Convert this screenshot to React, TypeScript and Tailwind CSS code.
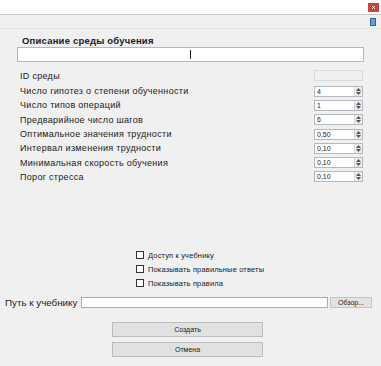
import React from "react";

const rows: { label: string; value: string }[] = [
  { label: "Число гипотез о степени обученности", value: "4" },
  { label: "Число типов операций", value: "1" },
  { label: "Предварийное число шагов", value: "6" },
  { label: "Оптимальное значения трудности", value: "0,50" },
  { label: "Интервал изменения трудности", value: "0,10" },
  { label: "Минимальная скорость обучения", value: "0,10" },
  { label: "Порог стресса", value: "0,10" },
];

const checks = ["Доступ к учебнику", "Показывать правильные ответы", "Показывать правила"];

function SpinBox({ value }: { value: string }) {
  return (
    <div className="flex h-[11px] w-[49px] border border-[#b5b8bf] bg-white">
      <div className="flex-1 pl-[2px] text-[7px] leading-[9px] text-[#222]">{value}</div>
      <div className="flex w-[8px] flex-col items-center justify-center gap-[1px] border-l border-[#d4d4d4] bg-[#ececec]">
        <svg width="5" height="3" viewBox="0 0 5 3">
          <path d="M0 3 L2.5 0 L5 3 Z" fill="#555" />
        </svg>
        <svg width="5" height="3" viewBox="0 0 5 3">
          <path d="M0 0 L2.5 3 L5 0 Z" fill="#555" />
        </svg>
      </div>
    </div>
  );
}

export default function App() {
  return (
    <div
      className="flex h-[366px] w-[381px] flex-col overflow-hidden bg-[#f0f0f0] text-[#1a1a1a]"
      style={{ fontFamily: '"Liberation Sans", Arial, sans-serif' }}
    >
      <div className="flex h-[15px] shrink-0 justify-end border-b border-[#c9c9c9] bg-white">
        <div className="mr-[2px] mt-[3px] flex h-[9px] w-[11px] items-center justify-center bg-[#c9453e]">
          <svg width="3" height="3" viewBox="0 0 3 3">
            <path d="M0 0 L3 3 M3 0 L0 3" stroke="#fff" strokeWidth="0.8" />
          </svg>
        </div>
      </div>
      <div className="flex h-[14px] shrink-0 justify-end border-b border-[#e4e4e4]">
        <div className="mr-[5px] mt-[3px] h-[8px] w-[6px] border border-[#2f5f9e] bg-[#6f9ddb]" />
      </div>

      <div className="ml-[22px] mt-[7px] text-[9.5px] font-bold leading-[10px] tracking-[0.2px]">
        Описание среды обучения
      </div>
      <div className="relative ml-[17px] mt-[1px] h-[15px] w-[347px] border border-[#9dbbdc] bg-white">
        <div className="absolute left-[172px] top-[2px] h-[9px] w-px bg-[#222]" />
      </div>

      <div className="ml-[17px] mt-[8px] flex h-[11px] w-[346px] items-center justify-between">
        <span className="pl-[3px] text-[9px] leading-[10px] tracking-[0.3px]">ID среды</span>
        <div className="h-[11px] w-[49px] border border-[#dadada] bg-[#f0f0f0]" />
      </div>

      <div className="ml-[17px] mt-[3px] flex w-[346px] flex-col">
        {rows.map((r, i) => (
          <div key={i} className="flex h-[14.3px] items-center justify-between">
            <span className="pl-[3px] text-[9px] leading-[10px] tracking-[0.3px]">{r.label}</span>
            <SpinBox value={r.value} />
          </div>
        ))}
      </div>

      <div className="ml-[136px] mt-[64px] flex flex-col">
        {checks.map((c) => (
          <div key={c} className="flex h-[14px] items-center gap-[4px]">
            <div className="h-[8px] w-[8px] border border-[#333] bg-white" />
            <span className="text-[7.5px] leading-[9px] tracking-[0.15px]">{c}</span>
          </div>
        ))}
      </div>

      <div className="ml-[5px] mt-[6px] flex h-[12px] items-center">
        <span className="w-[76px] text-[9.8px] leading-[11px]">Путь к учебнику</span>
        <div className="h-[11px] w-[247px] border border-[#a9abb0] bg-white" />
        <button className="ml-[2px] flex h-[11px] w-[42px] items-center justify-center border border-[#c4c4c4] bg-[#e3e3e3] text-[7px] leading-[9px]">
          Обзор...
        </button>
      </div>

      <button className="ml-[112px] mt-[14px] flex h-[15px] w-[151px] items-center justify-center border border-[#bdbdbd] bg-[#e1e1e1] text-[7px] leading-[9px]">
        Создать
      </button>
      <button className="ml-[112px] mt-[5px] flex h-[15px] w-[151px] items-center justify-center border border-[#bdbdbd] bg-[#e1e1e1] text-[7px] leading-[9px]">
        Отмена
      </button>
    </div>
  );
}
